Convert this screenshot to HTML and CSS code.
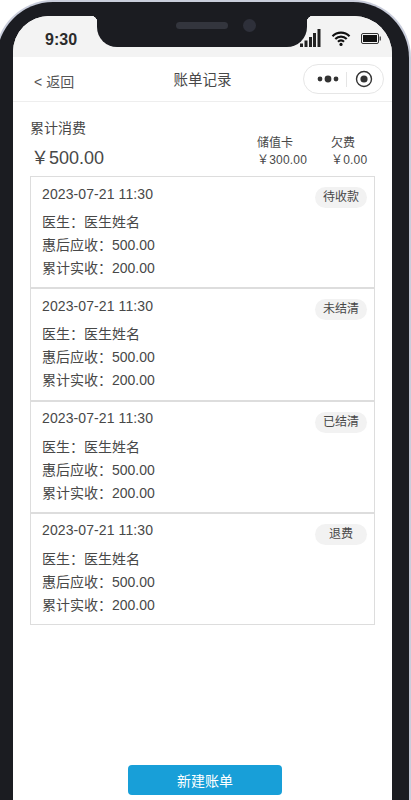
FILE: index.html
```html
<!DOCTYPE html>
<html lang="zh-CN">
<head>
    <meta charset="UTF-8">
    <meta name="viewport" content="width=device-width, initial-scale=1.0">
    <title>账单记录</title>
    <link rel="stylesheet" href="styles.css">
</head>
<body>
    <div class="phone">
        <div class="bezel">
            <div class="screen">
                <div class="statusbar">
                    <div class="time">9:30</div>
                    <div class="notch">
                        <span class="speaker"></span>
                        <span class="camera"></span>
                    </div>
                    <div class="status-icons">
                        <svg width="21" height="18" viewBox="0 0 21 18"><rect x="0" y="14.5" width="3" height="3.5" fill="#222"/><rect x="4.5" y="11.5" width="3" height="6.5" fill="#222"/><rect x="9" y="8" width="3" height="10" fill="#222"/><rect x="13" y="4" width="3" height="14" fill="#222"/><rect x="17.5" y="0" width="3" height="18" fill="#222"/></svg>
                        <svg class="icon-wifi" width="20" height="15" viewBox="0 0 20 15"><path d="M1.5 5.2a12 12 0 0 1 17 0M4.3 8a8 8 0 0 1 11.4 0M7 10.7a4.2 4.2 0 0 1 6 0" fill="none" stroke="#111" stroke-width="2.2"/><circle cx="10" cy="13.4" r="1.6" fill="#111"/></svg>
                        <svg class="icon-battery" width="20" height="11" viewBox="0 0 20 11"><rect x="0.5" y="0.5" width="17" height="10" rx="1.5" fill="none" stroke="#333"/><rect x="2" y="2" width="14" height="7" fill="#111"/><rect x="18.5" y="3.5" width="1.5" height="4" fill="#555"/></svg>
                    </div>
                </div>
                <div class="navbar">
                    <div class="back"><span class="back-arrow">&lt;</span>返回</div>
                    <div class="nav-title">账单记录</div>
                    <div class="capsule">
                        <svg width="22" height="10" viewBox="0 0 22 10"><circle cx="3" cy="5" r="2.4" fill="#333"/><circle cx="11" cy="5" r="3.4" fill="#333"/><circle cx="19" cy="5" r="2.4" fill="#333"/></svg>
                        <span class="capsule-line"></span>
                        <svg width="18" height="18" viewBox="0 0 18 18"><circle cx="9" cy="9" r="7.5" fill="none" stroke="#333" stroke-width="1.4"/><circle cx="9" cy="9" r="3.6" fill="#333"/></svg>
                    </div>
                </div>
                <div class="content">
                    <div class="summary">
                        <div class="summary-main">
                            <div class="summary-label">累计消费</div>
                            <div class="summary-total">￥500.00</div>
                        </div>
                        <div class="summary-side summary-card">
                            <div class="side-label">储值卡</div>
                            <div class="side-value">￥300.00</div>
                        </div>
                        <div class="summary-side summary-debt">
                            <div class="side-label">欠费</div>
                            <div class="side-value">￥0.00</div>
                        </div>
                    </div>
                    <div class="bill-list">
                        <div class="bill">
                            <div class="bill-date">2023-07-21 11:30</div>
                            <div class="bill-doctor">医生：医生姓名</div>
                            <div class="bill-row">惠后应收：500.00</div>
                            <div class="bill-row">累计实收：200.00</div>
                            <span class="badge">待收款</span>
                        </div>
                        <div class="bill">
                            <div class="bill-date">2023-07-21 11:30</div>
                            <div class="bill-doctor">医生：医生姓名</div>
                            <div class="bill-row">惠后应收：500.00</div>
                            <div class="bill-row">累计实收：200.00</div>
                            <span class="badge">未结清</span>
                        </div>
                        <div class="bill">
                            <div class="bill-date">2023-07-21 11:30</div>
                            <div class="bill-doctor">医生：医生姓名</div>
                            <div class="bill-row">惠后应收：500.00</div>
                            <div class="bill-row">累计实收：200.00</div>
                            <span class="badge">已结清</span>
                        </div>
                        <div class="bill">
                            <div class="bill-date">2023-07-21 11:30</div>
                            <div class="bill-doctor">医生：医生姓名</div>
                            <div class="bill-row">惠后应收：500.00</div>
                            <div class="bill-row">累计实收：200.00</div>
                            <span class="badge">退费</span>
                        </div>
                    </div>
                </div>
                <div class="footer">
                    <button class="new-bill">新建账单</button>
                </div>
            </div>
        </div>
    </div>
</body>
</html>
```

FILE: styles.css
```css
html, body {
    margin: 0;
    height: 800px;
    overflow: hidden;
    background: #fff;
}

body {
    font-family: "Liberation Sans", "Noto Sans CJK SC", sans-serif;
    color: #484848;
}

.phone {
    width: 416px;
    height: 830px;
    margin-left: -5px;
    box-sizing: border-box;
    padding: 2px 2px 0;
    background: #c9cddb;
    border-radius: 58px 58px 0 0;
}

.bezel {
    height: 100%;
    box-sizing: border-box;
    padding: 14px 17px 0 16px;
    background: #1b1c21;
    border-radius: 56px 56px 0 0;
}

.screen {
    height: 100%;
    display: flex;
    flex-direction: column;
    background: #fff;
    border-radius: 36px 38px 0 0;
    overflow: hidden;
}

.statusbar {
    height: 41px;
    flex: none;
    display: flex;
    background: #f3f3f3;
}

.time {
    width: 84px;
    padding-top: 15px;
    padding-left: 32px;
    box-sizing: border-box;
    font-size: 16px;
    line-height: 18px;
    font-weight: 700;
    color: #2b2b2b;
}

.notch {
    position: relative;
    width: 210px;
    height: 31px;
    display: flex;
    justify-content: center;
    align-items: flex-start;
    gap: 15px;
    padding-top: 4px;
    box-sizing: border-box;
    background: #1b1c21;
    border-radius: 0 0 20px 20px;
}

/* little flare where the notch meets the top edge */
.notch::before,
.notch::after {
    content: "";
    position: absolute;
    top: 0;
    width: 6px;
    height: 6px;
}

.notch::before {
    left: -6px;
    background: radial-gradient(circle at 0 100%, transparent 6px, #1b1c21 6.5px);
}

.notch::after {
    right: -6px;
    background: radial-gradient(circle at 100% 100%, transparent 6px, #1b1c21 6.5px);
}

.speaker {
    width: 52px;
    height: 7px;
    margin-top: 2px;
    margin-left: 28px;
    background: #33353d;
    border-radius: 4px;
}

.camera {
    width: 13px;
    height: 13px;
    margin-top: -1px;
    background: #2e303a;
    border-radius: 50%;
}

.status-icons {
    flex: 1;
    display: flex;
    align-items: flex-end;
    gap: 10px;
    padding: 0 0 10px 0;
    margin-left: -7px;
}

.icon-wifi {
    margin-bottom: 1px;
}

.icon-battery {
    margin-bottom: 3px;
}

.navbar {
    height: 45px;
    flex: none;
    display: flex;
    align-items: center;
    box-sizing: border-box;
    border-bottom: 1px solid #eee;
    padding-right: 8px;
}

.back {
    padding-left: 21px;
    font-size: 14px;
    color: #555;
    margin-top: 4px;
}

.back-arrow {
    margin-right: 4px;
}

.nav-title {
    flex: 1;
    text-align: center;
    font-size: 14.5px;
    color: #484848;
    padding-left: 28px;
    margin-top: -2px;
}

.capsule {
    width: 81px;
    height: 30px;
    box-sizing: border-box;
    display: flex;
    align-items: center;
    gap: 7px;
    padding-left: 13px;
    border: 1px solid #e6e6e6;
    border-radius: 15px;
}

.capsule-line {
    width: 1px;
    height: 15px;
    background: #e5e5e5;
}

.capsule svg:last-child {
    margin-left: 1px;
}

.content {
    flex: 1;
    padding: 0 17px;
}

.summary {
    height: 74px;
    display: flex;
    align-items: flex-start;
}

.summary-main {
    flex: 1;
    padding-top: 16px;
}

.summary-label {
    font-size: 14px;
    line-height: 20px;
}

.summary-total {
    margin-top: 9px;
    margin-left: 1px;
    font-size: 18px;
    line-height: 22px;
}

.summary-side {
    padding-top: 33px;
    font-size: 12px;
    line-height: 17px;
}

.summary-card {
    width: 74px;
}

.summary-debt {
    width: 44px;
}

.side-value {
    font-size: 12px;
    letter-spacing: 0.2px;
}

.bill-list {
    display: flex;
    flex-direction: column;
}

.bill {
    position: relative;
    height: 112.3px;
    box-sizing: border-box;
    padding: 5.5px 11px 0;
    border: 1.5px solid #ddd;
    font-size: 14px;
    line-height: 22px;
}

.bill-date {
    letter-spacing: 0.1px;
}

.bill-doctor {
    margin: 6.5px 0 0.5px;
}

.bill-row {
    margin-top: 1px;
}

.badge {
    position: absolute;
    top: 10px;
    right: 7px;
    width: 52px;
    height: 21px;
    line-height: 21px;
    text-align: center;
    font-size: 12px;
    background: #f2f2f2;
    border-radius: 11px;
}

.footer {
    height: 65px;
    flex: none;
    display: flex;
    justify-content: center;
    padding-left: 5px;
}

.new-bill {
    width: 154px;
    height: 30px;
    border: none;
    border-radius: 4px;
    background: #189fd8;
    color: #fff;
    font-family: inherit;
    font-size: 14px;
}
```
